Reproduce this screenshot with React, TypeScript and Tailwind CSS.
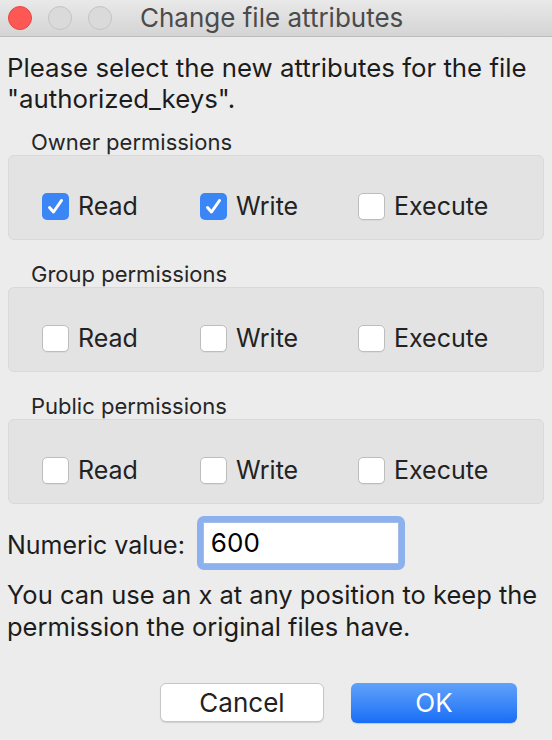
import React from 'react'

// macOS style "Change file attributes" dialog

type Perm = { label: string; checked: boolean }

const groups: { title: string; perms: Perm[] }[] = [
    {
        title: 'Owner permissions',
        perms: [
            { label: 'Read', checked: true },
            { label: 'Write', checked: true },
            { label: 'Execute', checked: false },
        ],
    },
    {
        title: 'Group permissions',
        perms: [
            { label: 'Read', checked: false },
            { label: 'Write', checked: false },
            { label: 'Execute', checked: false },
        ],
    },
    {
        title: 'Public permissions',
        perms: [
            { label: 'Read', checked: false },
            { label: 'Write', checked: false },
            { label: 'Execute', checked: false },
        ],
    },
]

function Checkbox({ checked }: { checked: boolean }) {
    if (checked) {
        return (
            <span className="flex h-[27px] w-[27px] shrink-0 items-center justify-center rounded-[5px] bg-[#3a86f7]">
                <svg width="27" height="27" viewBox="0 0 27 27">
                    <path d="M7.5 14.5 L11.5 19 L19.5 7.5" stroke="white" strokeWidth="3" fill="none" strokeLinecap="round" strokeLinejoin="round" />
                </svg>
            </span>
        )
    }
    return <span className="h-[27px] w-[27px] shrink-0 rounded-[5px] border border-[#bdbdbd] bg-white shadow-[0_1px_0_rgba(0,0,0,0.04)]" />
}

export default function App() {
    return (
        <div className="flex h-[740px] w-[552px] flex-col overflow-hidden bg-[#ececec] font-['Inter','Liberation_Sans',sans-serif] text-[#1c1c1c]">
            {/* title bar */}
            <div className="flex h-[37px] shrink-0 items-center border-b border-[#bcbcbc] bg-linear-to-b from-[#e9e9e9] to-[#d4d4d4] pl-[8px]">
                <span className="h-[24px] w-[24px] rounded-full border border-[#e24a45] bg-[#fd5854]" />
                <span className="ml-[16px] h-[24px] w-[24px] rounded-full border border-[#c4c4c4] bg-[#dadada]" />
                <span className="ml-[16px] h-[24px] w-[24px] rounded-full border border-[#c4c4c4] bg-[#dadada]" />
                <span className="ml-[28px] text-[26px] leading-[30px] text-[#4b4b4b]">Change file attributes</span>
            </div>

            <p className="mt-[15px] px-[7px] text-[25.8px] leading-[31px]">
                Please select the new attributes for the file "authorized_keys".
            </p>

            <div className="mt-[16px] flex flex-col gap-[22px]">
                {groups.map(group => (
                    <div key={group.title}>
                        <div className="h-[25px] pl-[31px] text-[22px] leading-[25px] text-[#262626]">{group.title}</div>
                        <div className="mx-[8px] flex h-[85px] rounded-[6px] border border-[#d9d9d9] bg-[#e3e3e3] pl-[33px] pt-[36px]">
                            {group.perms.map(perm => (
                                <div key={perm.label} className="flex h-[28px] w-[158px] items-center gap-[9px]">
                                    <Checkbox checked={perm.checked} />
                                    <span className="text-[25px] leading-[28px] text-[#222]">{perm.label}</span>
                                </div>
                            ))}
                        </div>
                    </div>
                ))}
            </div>

            <div className="mt-[12px] flex items-center px-[7px]">
                <span className="pt-[4px] text-[25px] leading-[30px]">Numeric value:</span>
                <div className="ml-[12px] h-[54px] w-[208px] rounded-[7px] bg-[#8cb1ee] p-[6px]">
                    <div className="flex h-full w-full items-center border border-[#a5bde4] bg-white pl-[7px] text-[26px] leading-[30px] text-black">
                        600
                    </div>
                </div>
            </div>

            <p className="mt-[9px] px-[7px] text-[25.5px] leading-[32px]">
                You can use an x at any position to keep the permission the original files have.
            </p>

            <div className="mt-[40px] flex justify-end gap-[27px] pr-[35px]">
                <button className="h-[39px] w-[164px] rounded-[6px] border border-[#c6c6c6] bg-white text-[26px] leading-[30px] text-[#222] shadow-[0_1px_1px_rgba(0,0,0,0.12)]">
                    Cancel
                </button>
                <button className="h-[40px] w-[166px] rounded-[6px] bg-linear-to-b from-[#60a2fa] to-[#166df5] text-[26px] leading-[30px] text-white shadow-[0_1px_1px_rgba(0,0,0,0.15)]">
                    OK
                </button>
            </div>
        </div>
    )
}
